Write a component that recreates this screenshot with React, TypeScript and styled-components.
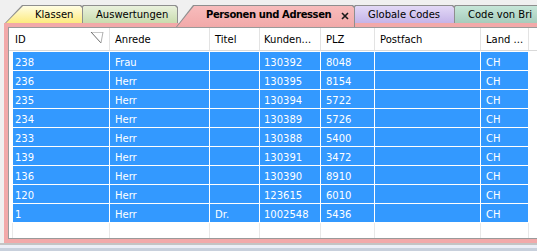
import React from 'react';
import styled, { createGlobalStyle } from 'styled-components';

const Global = createGlobalStyle`
  html, body { margin: 0; padding: 0; background: #f0f0f0; }
  body { font-family: "DejaVu Sans", Verdana, sans-serif; font-size: 10px; }
`;

const Page = styled.div`
  width: 537px;
  height: 251px;
  overflow: hidden;
  display: flex;
  flex-direction: column;
  background: #f0f0f0;
`;

const TabStrip = styled.div`
  height: 23px;
  flex: none;
  display: flex;
  align-items: flex-end;
  padding-left: 5px;
  position: relative;
  z-index: 2;
`;

const shape = `polygon(0 100%, 17px 0, calc(100% - 2px) 0, 100% 2px, 100% 100%)`;

const Tab = styled.div<{ $w: number; $ml: number; $z: number; $active?: boolean }>`
  flex: none;
  width: ${(p) => p.$w}px;
  height: ${(p) => (p.$active ? 22 : 18)}px;
  margin-left: ${(p) => p.$ml}px;
  margin-bottom: ${(p) => (p.$active ? -4 : 0)}px;
  position: relative;
  z-index: ${(p) => p.$z};
  background: #8e8e8e;
  clip-path: ${shape};
  display: flex;
`;

const TabFace = styled.div<{ $from: string; $to: string; $bold?: boolean }>`
  flex: 1;
  margin: 1px 1px 0 1px;
  clip-path: ${shape};
  background: linear-gradient(to bottom, ${(p) => p.$from}, ${(p) => p.$to});
  display: flex;
  align-items: flex-start;
  padding: 3px 0 0 29px;
  color: #000;
  font-weight: ${(p) => (p.$bold ? 700 : 400)};
  letter-spacing: ${(p) => (p.$bold ? '-0.4px' : '0')};
  white-space: nowrap;
  line-height: 12px;
`;

const CloseX = styled.svg`
  margin-left: 10px;
  margin-top: 3px;
  flex: none;
`;

const Frame = styled.div`
  flex: none;
  width: 560px;
  height: 220px;
  box-sizing: border-box;
  margin-left: 4px;
  background: #f2a9a9;
  padding: 4px 0 4px 4px;
  display: flex;
`;

const GridBox = styled.div`
  flex: 1;
  border: 1px solid #9a9a9a;
  border-right: none;
  background: #fff;
  display: flex;
  flex-direction: column;
`;

const HeaderRow = styled.div`
  height: 22px;
  flex: none;
  display: flex;
  border-bottom: 1px solid #d9d9d9;
`;

const HeadCell = styled.div<{ $w: number; $pl: number }>`
  flex: none;
  width: ${(p) => p.$w}px;
  box-sizing: border-box;
  border-right: 1px solid #e3e3e3;
  padding: 5px 5px 0 ${(p) => p.$pl}px;
  line-height: 14px;
  color: #000;
  display: flex;
  justify-content: space-between;
  align-items: flex-start;
  white-space: nowrap;
  overflow: hidden;
`;

const Spacer = styled.div<{ $w: number }>`
  flex: none;
  width: ${(p) => p.$w}px;
`;

const Row = styled.div`
  height: 18px;
  flex: none;
  margin-top: 1px;
  display: flex;
`;

const Cell = styled.div<{ $w: number; $pl: number }>`
  flex: none;
  width: ${(p) => p.$w}px;
  box-sizing: border-box;
  border-right: 1px solid #fff;
  background: #3399ff;
  color: #fff;
  padding: 4px 0 0 ${(p) => p.$pl}px;
  line-height: 14px;
  white-space: nowrap;
  overflow: hidden;
`;

const BlankCell = styled.div<{ $w: number }>`
  flex: none;
  width: ${(p) => p.$w}px;
  box-sizing: border-box;
  border-right: 1px solid #e8e8e8;
`;

const Filler = styled.div`
  flex: 1;
  margin-top: 1px;
  display: flex;
`;

const BottomBar = styled.div`
  flex: none;
  height: 8px;
  border-top: 2px solid #c4c4c4;
  background: linear-gradient(to bottom, #eceef6 0, #eceef6 3px, #c8d0dc 3px);
`;

const SortIcon = () => (
  <svg width="14" height="13" viewBox="0 0 14 13" style={{ marginTop: -2 }}>
    <path d="M1 1.5 H13" stroke="#c8c8c8" strokeWidth="1" />
    <path d="M1 1 L11 12" stroke="#6e6e6e" strokeWidth="1" fill="none" />
    <path d="M13 1 L11 12" stroke="#b0b0b0" strokeWidth="1" fill="none" />
  </svg>
);

type Col = { key: string; title: string; w: number; pl: number };

const cols: Col[] = [
  { key: 'id', title: 'ID', w: 97, pl: 2 },
  { key: 'anrede', title: 'Anrede', w: 100, pl: 5 },
  { key: 'titel', title: 'Titel', w: 50, pl: 5 },
  { key: 'kunden', title: 'Kunden...', w: 61, pl: 4 },
  { key: 'plz', title: 'PLZ', w: 54, pl: 5 },
  { key: 'postfach', title: 'Postfach', w: 106, pl: 5 },
  { key: 'land', title: 'Land ...', w: 48, pl: 5 },
];

const rows: Record<string, string>[] = [
  { id: '238', anrede: 'Frau', titel: '', kunden: '130392', plz: '8048', postfach: '', land: 'CH' },
  { id: '236', anrede: 'Herr', titel: '', kunden: '130395', plz: '8154', postfach: '', land: 'CH' },
  { id: '235', anrede: 'Herr', titel: '', kunden: '130394', plz: '5722', postfach: '', land: 'CH' },
  { id: '234', anrede: 'Herr', titel: '', kunden: '130389', plz: '5726', postfach: '', land: 'CH' },
  { id: '233', anrede: 'Herr', titel: '', kunden: '130388', plz: '5400', postfach: '', land: 'CH' },
  { id: '139', anrede: 'Herr', titel: '', kunden: '130391', plz: '3472', postfach: '', land: 'CH' },
  { id: '136', anrede: 'Herr', titel: '', kunden: '130390', plz: '8910', postfach: '', land: 'CH' },
  { id: '120', anrede: 'Herr', titel: '', kunden: '123615', plz: '6010', postfach: '', land: 'CH' },
  { id: '1', anrede: 'Herr', titel: 'Dr.', kunden: '1002548', plz: '5436', postfach: '', land: 'CH' },
];

const tabs = [
  { label: 'Klassen', w: 78, ml: 0, z: 5, from: '#fffde2', to: '#fdeb7e' },
  { label: 'Auswertungen', w: 112, ml: -17, z: 4, from: '#e9f1dc', to: '#c9dcae' },
  { label: 'Personen und Adressen', w: 179, ml: -2, z: 10, from: '#f7bcbc', to: '#f2a9a9', active: true },
  { label: 'Globale Codes', w: 117, ml: -17, z: 3, from: '#e2d8f6', to: '#c5b4e8' },
  { label: 'Code von Bri', w: 130, ml: -17, z: 2, from: '#c6e6d8', to: '#a6ccbc' },
];

export default function App() {
  return (
    <Page>
      <Global />
      <TabStrip>
        {tabs.map((t) => (
          <Tab key={t.label} $w={t.w} $ml={t.ml} $z={t.z} $active={t.active}>
            <TabFace $from={t.from} $to={t.to} $bold={t.active}>
              {t.label}
              {t.active && (
                <CloseX width="8" height="8" viewBox="0 0 8 8">
                  <path d="M1 1 L7 7 M7 1 L1 7" stroke="#1a1a1a" strokeWidth="1.6" />
                </CloseX>
              )}
            </TabFace>
          </Tab>
        ))}
      </TabStrip>
      <Frame>
        <GridBox>
          <HeaderRow>
            <Spacer $w={4} />
            {cols.map((c) => (
              <HeadCell key={c.key} $w={c.w} $pl={c.pl}>
                <span>{c.title}</span>
                {c.key === 'id' && <SortIcon />}
              </HeadCell>
            ))}
            <HeadCell $w={80} $pl={5} />
          </HeaderRow>
          {rows.map((r) => (
            <Row key={r.id}>
              <Spacer $w={4} />
              {cols.map((c) => (
                <Cell key={c.key} $w={c.w} $pl={c.pl}>
                  {r[c.key]}
                </Cell>
              ))}
              <BlankCell $w={80} />
            </Row>
          ))}
          <Filler>
            <BlankCell $w={4} />
            {cols.map((c) => (
              <BlankCell key={c.key} $w={c.w} />
            ))}
            <BlankCell $w={80} />
          </Filler>
        </GridBox>
      </Frame>
      <BottomBar />
    </Page>
  );
}
